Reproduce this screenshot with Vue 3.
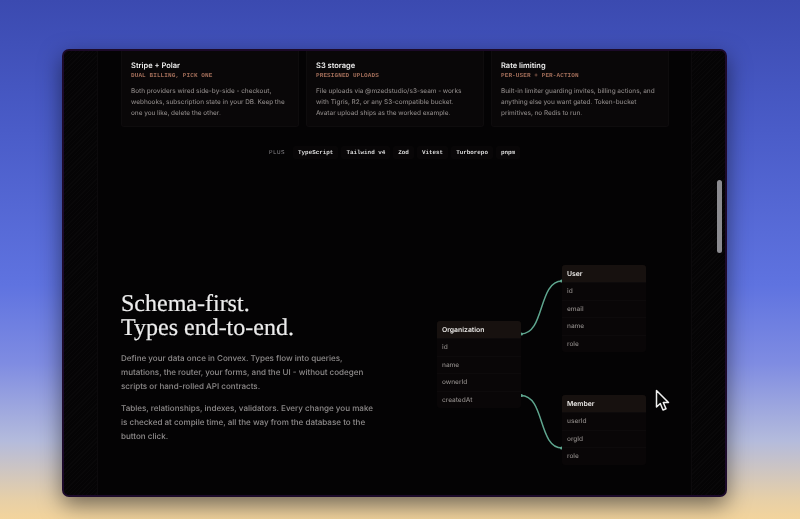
<script setup>
const cards = [
  {
    title: 'Stripe + Polar',
    tag: 'DUAL BILLING, PICK ONE',
    text: 'Both providers wired side-by-side - checkout, webhooks, subscription state in your DB. Keep the one you like, delete the other.',
  },
  {
    title: 'S3 storage',
    tag: 'PRESIGNED UPLOADS',
    text: 'File uploads via @mzedstudio/s3-seam - works with Tigris, R2, or any S3-compatible bucket. Avatar upload ships as the worked example.',
  },
  {
    title: 'Rate limiting',
    tag: 'PER-USER + PER-ACTION',
    text: 'Built-in limiter guarding invites, billing actions, and anything else you want gated. Token-bucket primitives, no Redis to run.',
  },
]

const stack = ['TypeScript', 'Tailwind v4', 'Zod', 'Vitest', 'Turborepo', 'pnpm']

const tables = [
  { name: 'Organization', fields: ['id', 'name', 'ownerId', 'createdAt'], left: 0, top: 56 },
  { name: 'User', fields: ['id', 'email', 'name', 'role'], left: 125, top: 0 },
  { name: 'Member', fields: ['userId', 'orgId', 'role'], left: 125, top: 130 },
]
</script>

<template>
  <div class="desktop">
    <div class="window">
      <div class="gutter"></div>
      <main class="content">
        <section class="cards">
          <article v-for="card in cards" :key="card.title" class="card">
            <h3>{{ card.title }}</h3>
            <p class="tag">{{ card.tag }}</p>
            <p class="text">{{ card.text }}</p>
          </article>
        </section>

        <div class="stack">
          <span class="plus">PLUS</span>
          <span v-for="item in stack" :key="item" class="chip">{{ item }}</span>
        </div>

        <section class="schema">
          <div class="copy">
            <h2>Schema-first.<br>Types end-to-end.</h2>
            <p>Define your data once in Convex. Types flow into queries, mutations, the router, your forms, and the UI - without codegen scripts or hand-rolled API contracts.</p>
            <p>Tables, relationships, indexes, validators. Every change you make is checked at compile time, all the way from the database to the button click.</p>
          </div>

          <div class="diagram">
            <svg class="links" width="209" height="200" viewBox="0 0 209 200" fill="none">
              <path d="M84 69C108 69 101 16 125 16" stroke="#5ea58e" stroke-width="1.500" />
              <path d="M84 130.500C108 130.500 101 183 125 183" stroke="#5ea58e" stroke-width="1.500" />
              <circle cx="84.500" cy="69" r="1.500" fill="#5ea58e" />
              <circle cx="124.500" cy="16" r="1.500" fill="#5ea58e" />
              <circle cx="84.500" cy="130.500" r="1.500" fill="#5ea58e" />
              <circle cx="124.500" cy="183" r="1.500" fill="#5ea58e" />
            </svg>
            <div
              v-for="table in tables"
              :key="table.name"
              class="table"
              :style="{ left: table.left + 'px', top: table.top + 'px' }"
            >
              <div class="table-head">{{ table.name }}</div>
              <div v-for="field in table.fields" :key="field" class="table-row">{{ field }}</div>
            </div>
          </div>
        </section>
      </main>
      <div class="gutter"></div>

      <div class="scrollbar"></div>
      <svg class="cursor" width="15" height="23" viewBox="0 0 15 23">
        <path d="M1.500 1.500V18L5.300 14.500L8 21L11 19.700L8.300 13.500H13.500Z" fill="#050505" stroke="#efefef" stroke-width="1.500" stroke-linejoin="round" />
      </svg>
    </div>
  </div>
</template>

<style scoped>
.desktop {
  height: 519px;
  box-sizing: border-box;
  padding: 49px 73px 22px 62px;
  overflow: hidden;
  background: linear-gradient(180deg, #3b4ab0 0%, #4a5cc8 25%, #5f73e0 55%, #7f8ce2 70%, #b4bbdc 85%, #e6cfa8 96%, #f3d49c 100%);
}

.window {
  position: relative;
  display: flex;
  height: 100%;
  box-sizing: border-box;
  border: 2px solid #1c0a2a;
  border-radius: 7px;
  overflow: hidden;
  background: #040304;
  box-shadow: 0 8px 22px rgba(0, 0, 0, 0.5);
  filter: blur(0.4px);
  font-family: Inter, "Liberation Sans", sans-serif;
  text-rendering: geometricPrecision;
}

.gutter {
  width: 33px;
  flex: none;
  background: repeating-linear-gradient(135deg, #050405 0 2px, #090809 2px 3px);
}

.gutter:first-child {
  border-right: 1px solid #0c0a0c;
}

.gutter:nth-child(3) {
  border-left: 1px solid #0c0a0c;
}

.content {
  flex: 1;
  min-width: 0;
  padding: 0 22px 0 23px;
}

.cards {
  display: grid;
  grid-template-columns: repeat(3, 178px);
  gap: 7px;
}

.card {
  height: 76px;
  box-sizing: border-box;
  padding: 10px 9px 0;
  background: #090708;
  border: 1px solid #0e0c0d;
  border-top: 0;
  border-radius: 0 0 3px 3px;
}

.card h3 {
  margin: 0;
  font-size: 7.500px;
  line-height: 10px;
  font-weight: 600;
  color: #ececec;
}

.tag {
  margin: 0 0 6px;
  font-family: "Liberation Mono", monospace;
  font-size: 6px;
  line-height: 9px;
  font-weight: 700;
  letter-spacing: 0.100px;
  color: #a06c58;
}

.text {
  margin: 0;
  font-size: 6.400px;
  line-height: 11px;
  font-weight: 500;
  color: #878281;
}

.stack {
  display: flex;
  justify-content: center;
  align-items: center;
  gap: 3px;
  height: 14px;
  margin-top: 18px;
  padding-right: 1px;
  font-family: "Liberation Mono", monospace;
  font-size: 5.900px;
  font-weight: 700;
}

.plus {
  margin-right: 5px;
  color: #858388;
  font-weight: 400;
  letter-spacing: 0.500px;
}

.chip {
  padding: 3px 5px;
  border-radius: 2px;
  background: #080607;
  color: #dcdcdc;
}

.schema {
  display: flex;
  justify-content: space-between;
  padding: 106px 23px 0 0;
}

.copy {
  width: 255px;
  padding-top: 27px;
}

.copy h2 {
  margin: 0 0 10.500px;
  font-family: "Liberation Serif", serif;
  font-size: 24px;
  line-height: 24px;
  font-weight: 400;
  color: #ececec;
  -webkit-text-stroke: 0.200px #ececec;
}

.copy p {
  margin: 0 0 8px;
  font-size: 8.050px;
  line-height: 14px;
  font-weight: 500;
  color: #8f8c8c;
}

.diagram {
  position: relative;
  width: 209px;
  height: 200px;
  flex: none;
}

.links {
  position: absolute;
  inset: 0;
}

.table {
  position: absolute;
  width: 84px;
  border-radius: 3px;
  overflow: hidden;
  background: #090607;
}

.table-head {
  height: 17px;
  padding-left: 5px;
  font-size: 6.850px;
  line-height: 17px;
  font-weight: 600;
  color: #e8e6e4;
  background: #17110f;
}

.table-row {
  height: 17.500px;
  padding-left: 5px;
  font-size: 6.500px;
  line-height: 17px;
  font-weight: 500;
  color: #8c8785;
  border-top: 1px solid #0d0a0b;
  box-sizing: border-box;
}

.scrollbar {
  position: absolute;
  top: 129px;
  right: 3px;
  width: 5px;
  height: 73px;
  border-radius: 3px;
  background: #8b8b90;
}

.cursor {
  position: absolute;
  left: 591px;
  top: 338px;
}
</style>
